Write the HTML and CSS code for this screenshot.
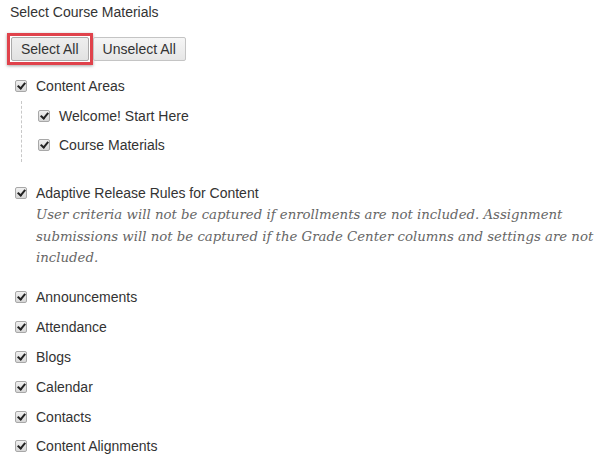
FILE: index.html
```html
<!DOCTYPE html>
<html>
<head>
<meta charset="utf-8">
<link rel="stylesheet" href="styles.css">
</head>
<body>
<div class="page">
  <div class="title">Select Course Materials</div>
  <div class="buttons">
    <span class="highlight"><button class="btn">Select All</button></span>
    <button class="btn">Unselect All</button>
  </div>
  <ul class="list">
    <li class="item group">
      <label class="row"><span class="cb"></span>Content Areas</label>
      <ul class="sub">
        <li class="item"><label class="row"><span class="cb"></span>Welcome! Start Here</label></li>
        <li class="item"><label class="row"><span class="cb"></span>Course Materials</label></li>
      </ul>
    </li>
    <li class="item adaptive">
      <label class="row"><span class="cb"></span>Adaptive Release Rules for Content</label>
      <p class="note">User criteria will not be captured if enrollments are not included. Assignment submissions will not be captured if the Grade Center columns and settings are not included.</p>
    </li>
    <li class="item"><label class="row"><span class="cb"></span>Announcements</label></li>
    <li class="item"><label class="row"><span class="cb"></span>Attendance</label></li>
    <li class="item"><label class="row"><span class="cb"></span>Blogs</label></li>
    <li class="item"><label class="row"><span class="cb"></span>Calendar</label></li>
    <li class="item"><label class="row"><span class="cb"></span>Contacts</label></li>
    <li class="item"><label class="row"><span class="cb"></span>Content Alignments</label></li>
  </ul>
</div>
</body>
</html>
```
FILE: styles.css
```css
html, body {
  margin: 0;
  padding: 0;
  background: #fff;
}
body {
  font-family: "Liberation Sans", Arial, sans-serif;
  font-size: 14px;
  color: #333;
}
.page {
  padding: 4px 0 0 10px;
}
.title {
  line-height: 17px;
  height: 17px;
}
.buttons {
  display: flex;
  align-items: center;
  margin-top: 12px;
  margin-left: -3px;
}
.highlight {
  display: inline-flex;
  border: 3px solid #e0424b;
  padding: 1px;
  box-shadow: 0 1px 3px rgba(0,0,0,0.35);
}
.btn {
  font-family: "Liberation Sans", Arial, sans-serif;
  font-size: 14px;
  color: #333;
  height: 24px;
  padding: 0 9px;
  margin: 0;
  border: 1px solid #c4c4c4;
  border-radius: 2px;
  background: linear-gradient(#f6f6f6, #e6e6e6);
}
.highlight .btn {
  padding: 0 9px;
  border-color: #aaa;
  background: linear-gradient(#eeeeee, #e2e2e2);
}
.list, .sub {
  list-style: none;
  margin: 0;
  padding: 0;
}
.list {
  margin-top: 10px;
  margin-left: 5px;
}
.item {
  margin: 0;
}
.row {
  display: flex;
  align-items: center;
  height: 29.8px;
}
.list > .item:first-child > .row {
  height: 21px;
}
.cb {
  position: relative;
  box-sizing: border-box;
  width: 12px;
  height: 12px;
  margin-right: 9px;
  border: 1px solid #a8a8a8;
  border-radius: 2px;
  background: linear-gradient(#f0f0f0, #d6d6d6);
  flex: none;
}
.cb::after {
  content: "";
  position: absolute;
  left: 3px;
  top: 0px;
  width: 3px;
  height: 6px;
  border: solid #222;
  border-width: 0 2px 2px 0;
  transform: rotate(40deg);
}
.sub {
  margin-left: 6px;
  margin-top: 5px;
  padding: 0 0 2px 16px;
  border-left: 1px dashed #c8c8c8;
}
.sub .row {
  height: 29.5px;
}
.adaptive {
  margin-top: 20px;
  margin-bottom: 14px;
}
.adaptive > .row {
  height: 22px;
}
.note {
  margin: 0 0 0 21px;
  font-family: "DejaVu Serif", Georgia, serif;
  font-style: italic;
  font-size: 13.3px;
  line-height: 21.5px;
  color: #666;
}
```
